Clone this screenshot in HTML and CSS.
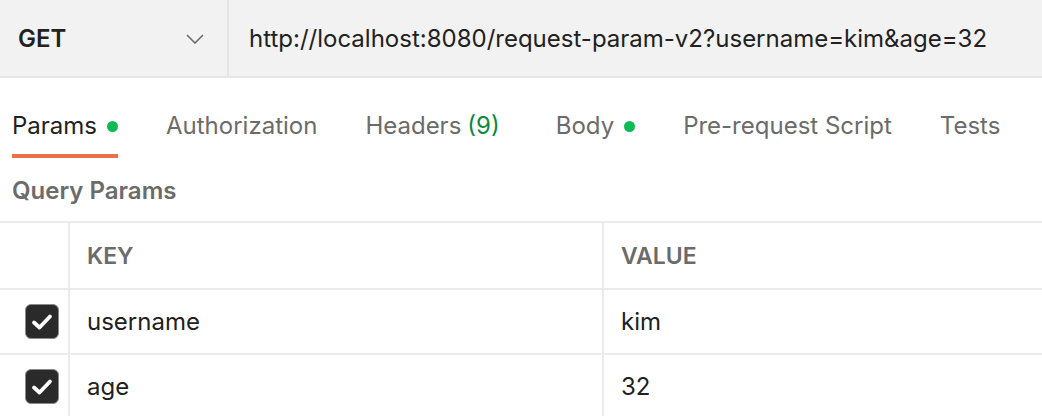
FILE: index.html
```html
<!DOCTYPE html>
<html>
<head>
<meta charset="utf-8">
<link rel="stylesheet" href="styles.css">
</head>
<body>
<div class="topbar">
  <div class="method">
    <span class="method-name">GET</span>
    <svg class="chev" width="18" height="10" viewBox="0 0 18 10"><path d="M1 1 L9 9 L17 1" fill="none" stroke="#6b6b6b" stroke-width="1.6"/></svg>
  </div>
  <div class="url">http://localhost:8080/request-param-v2?username=kim&amp;age=32</div>
</div>
<nav class="tabs">
  <div class="tab active">Params<span class="dot"></span></div>
  <div class="tab">Authorization</div>
  <div class="tab tab-headers">Headers <span class="count">(9)</span></div>
  <div class="tab">Body<span class="dot"></span></div>
  <div class="tab">Pre-request Script</div>
  <div class="tab">Tests</div>
</nav>
<div class="section-title">Query Params</div>
<div class="table">
  <div class="row head">
    <div class="cell check"></div>
    <div class="cell">KEY</div>
    <div class="cell">VALUE</div>
  </div>
  <div class="row">
    <div class="cell check"><span class="box"><svg width="22" height="18" viewBox="0 0 22 18"><path d="M3 9.5 L8.5 14.5 L19 3.5" fill="none" stroke="#fff" stroke-width="3.8" stroke-linecap="round" stroke-linejoin="round"/></svg></span></div>
    <div class="cell">username</div>
    <div class="cell">kim</div>
  </div>
  <div class="row">
    <div class="cell check"><span class="box"><svg width="22" height="18" viewBox="0 0 22 18"><path d="M3 9.5 L8.5 14.5 L19 3.5" fill="none" stroke="#fff" stroke-width="3.8" stroke-linecap="round" stroke-linejoin="round"/></svg></span></div>
    <div class="cell">age</div>
    <div class="cell">32</div>
  </div>
</div>
</body>
</html>
```
FILE: styles.css
```css
* { box-sizing: border-box; }
html, body { margin: 0; padding: 0; background: #fff; }
body {
  font-family: Inter, "Noto Sans", sans-serif;
  color: #212121;
  width: 1042px;
  height: 416px;
  overflow: hidden;
}
.topbar {
  display: flex;
  height: 78px;
  background: #f2f2f2;
  border-bottom: 2px solid #e6e6e6;
}
.method {
  width: 229px;
  flex: none;
  display: flex;
  align-items: center;
  justify-content: space-between;
  padding: 0 23px 0 18px;
  border-right: 2px solid #e4e4e4;
}
.method-name { font-weight: 600; font-size: 24px; }
.chev { display: block; margin-top: 2px; }
.url {
  display: flex;
  align-items: center;
  padding-left: 20px;
  font-size: 24px;
  white-space: nowrap;
}
.tabs {
  display: flex;
  gap: 48px;
  padding-left: 12px;
  margin-top: 31px;
  height: 49px;
}
.tab {
  display: flex;
  align-items: flex-start;
  font-size: 24px;
  color: #6b6b6b;
  line-height: 34px;
  height: 49px;
  white-space: nowrap;
}
.tab-headers { margin-right: 8px; }
.tab.active { color: #212121; border-bottom: 4px solid #ef7047; }
.dot {
  width: 11px;
  height: 11px;
  border-radius: 50%;
  background: #0cbb52;
  margin: 12px 0 0 10px;
}
.count { color: #0b8a3e; margin-left: 6px; }
.section-title {
  font-size: 24px;
  font-weight: 600;
  color: #6b6b6b;
  padding-left: 12px;
  margin-top: 19px;
  line-height: 28px;
}
.table {
  margin-top: 16px;
  border-top: 2px solid #ebebeb;
}
.row {
  display: grid;
  grid-template-columns: 70px 534px 1fr;
  height: 65px;
  border-bottom: 2px solid #ebebeb;
}
.row.head { height: 67px; }
.cell {
  display: flex;
  align-items: center;
  padding-left: 17px;
  font-size: 24px;
  border-right: 2px solid #ebebeb;
}
.cell:last-child { border-right: none; }
.head .cell { font-weight: 600; color: #6b6b6b; font-size: 23px; }
.cell.check { padding-left: 25px; }
.box {
  width: 34px;
  height: 35px;
  border-radius: 6px;
  background: #2a2a2a;
  border: 1.5px solid #8a8a8a;
  display: flex;
  align-items: center;
  justify-content: center;
}
.box svg { display: block; }
```
